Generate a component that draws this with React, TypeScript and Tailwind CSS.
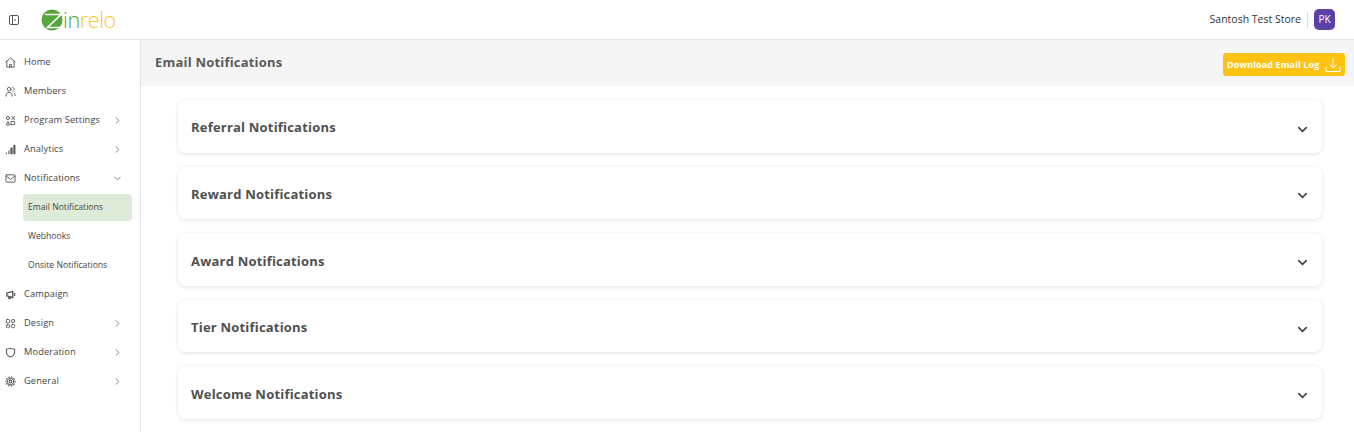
import { ChevronDown, ChevronRight } from "lucide-react";
import type { ReactNode } from "react";

const font = { fontFamily: '"Open Sans", sans-serif' };

const stroke = {
  width: 11,
  height: 11,
  viewBox: "0 0 24 24",
  fill: "none",
  stroke: "#555",
  strokeWidth: 2,
  strokeLinecap: "round" as const,
  strokeLinejoin: "round" as const,
};

const icons: Record<string, ReactNode> = {
  home: (
    <svg {...stroke}>
      <path d="M2 11 12 2l10 9" />
      <path d="M4 9v13h16V9" />
      <path d="M10 22v-6h4v6" />
    </svg>
  ),
  members: (
    <svg {...stroke}>
      <circle cx="9" cy="7" r="4" />
      <path d="M2 22c0-5 3-8 7-8s7 3 7 8" />
      <path d="M17 3c2 .5 3 2 3 4s-1 3-3 4" />
      <path d="M20 15c1.500 1 2 3 2 6" />
    </svg>
  ),
  program: (
    <svg {...stroke}>
      <circle cx="6.500" cy="6.500" r="3.500" />
      <path d="m15 3 6 7M21 3l-6 7" />
      <path d="M3 21l3.500-7 3.500 7z" />
      <rect x="14" y="14" width="7" height="7" />
    </svg>
  ),
  analytics: (
    <svg {...stroke} strokeWidth={2.4}>
      <path d="M3 21v-1" />
      <path d="M8.500 21v-6" />
      <rect x="13" y="9" width="2.500" height="12" />
      <rect x="19.500" y="3" width="2" height="18" />
    </svg>
  ),
  notifications: (
    <svg {...stroke}>
      <rect x="2" y="4" width="20" height="16" rx="2" />
      <path d="m3 7 9 7 9-7" />
    </svg>
  ),
  campaign: (
    <svg {...stroke} strokeWidth={2.8}>
      <path d="M4 9v6l13 4V5z" />
      <path d="M8 16v3a2 2 0 0 0 4 0v-2" />
      <path d="M21 10v4" />
    </svg>
  ),
  design: (
    <svg {...stroke}>
      <rect x="3" y="3" width="7" height="8" rx="2" />
      <circle cx="17.500" cy="6.500" r="3.500" />
      <rect x="3" y="15" width="7" height="6" rx="2" />
      <rect x="14" y="14" width="7" height="7" rx="2" />
    </svg>
  ),
  moderation: (
    <svg {...stroke} strokeWidth={2.2}>
      <path d="M12 22c5-2 9-5 9-11V5l-9-2-9 2v6c0 6 4 9 9 11z" />
    </svg>
  ),
  general: (
    <svg {...stroke} strokeWidth={2.2}>
      <circle cx="12" cy="12" r="3" />
      <circle cx="12" cy="12" r="7" strokeDasharray="3 2" />
      <circle cx="12" cy="12" r="10" strokeDasharray="2 4" />
    </svg>
  ),
};

type NavItem = { label: string; icon: string; arrow?: "right" | "down" };

const topNav: NavItem[] = [
  { label: "Home", icon: "home" },
  { label: "Members", icon: "members" },
  { label: "Program Settings", icon: "program", arrow: "right" },
  { label: "Analytics", icon: "analytics", arrow: "right" },
  { label: "Notifications", icon: "notifications", arrow: "down" },
];

const subNav = ["Email Notifications", "Webhooks", "Onsite Notifications"];

const bottomNav: NavItem[] = [
  { label: "Campaign", icon: "campaign" },
  { label: "Design", icon: "design", arrow: "right" },
  { label: "Moderation", icon: "moderation", arrow: "right" },
  { label: "General", icon: "general", arrow: "right" },
];

const sections = [
  "Referral Notifications",
  "Reward Notifications",
  "Award Notifications",
  "Tier Notifications",
  "Welcome Notifications",
];

function NavRow({ item }: { item: NavItem }) {
  return (
    <div className="flex h-[29px] items-center pr-[17px] pl-[5px] text-[9.3px] text-[#444]">
      <span className="flex w-[19px] shrink-0 items-center">{icons[item.icon]}</span>
      <span className="flex-1 pb-[2px] tracking-[0.1px]">{item.label}</span>
      {item.arrow === "right" && <ChevronRight size={11} color="#777" />}
      {item.arrow === "down" && <ChevronDown size={11} color="#777" />}
    </div>
  );
}

function Logo() {
  return (
    <div className="flex items-center">
      <svg width="22" height="22" viewBox="0 0 22 22">
        <circle cx="11" cy="11" r="10.500" fill="#55a73a" />
        <path d="M4 5.500h16L6.500 18.500H22" fill="none" stroke="#fff" strokeWidth="1.600" />
      </svg>
      <span className="text-[21.5px] leading-none font-light tracking-[-0.4px]">
        <span className="text-[#55a73a]">in</span>
        <span className="text-[#fdc524]">relo</span>
      </span>
    </div>
  );
}

export default function App() {
  return (
    <div className="flex h-[432px] w-[1354px] flex-col overflow-hidden bg-white" style={font}>
      <header className="flex h-[40px] shrink-0 items-center border-b border-[#e3e5ea] pr-[19px] pl-[8px]">
        <svg width="12" height="12" viewBox="0 0 12 12" fill="none" stroke="#555" strokeWidth="1">
          <rect x="1.500" y="1.500" width="9" height="9" rx="1.500" />
          <path d="M4.500 1.500v9M7.500 5 6.500 6l1 1" />
        </svg>
        <div className="ml-[21px]">
          <Logo />
        </div>
        <div className="ml-auto flex items-center">
          <span className="text-[10.5px] text-[#333]">Santosh Test Store</span>
          <span className="mx-[6px] h-[16px] w-px bg-[#ddd]" />
          <span className="flex h-[21px] w-[21px] items-center justify-center rounded-[5px] bg-[#5b40a8] text-[10px] text-white">
            PK
          </span>
        </div>
      </header>

      <div className="flex min-h-0 flex-1">
        <aside className="w-[141px] shrink-0 border-r border-[#e3e5ea] pt-[8px]">
          {topNav.map((item) => (
            <NavRow key={item.label} item={item} />
          ))}
          {subNav.map((label, i) => (
            <div key={label} className="flex h-[29px] items-center pl-[23px]">
              <span
                className={`flex h-[27px] w-[109px] items-center rounded-[4px] pl-[5px] text-[8.65px] text-[#444] ${
                  i === 0 ? "bg-[#deebd9]" : ""
                }`}
              >
                {label}
              </span>
            </div>
          ))}
          {bottomNav.map((item) => (
            <NavRow key={item.label} item={item} />
          ))}
        </aside>

        <main className="min-w-0 flex-1">
          <div className="flex h-[46px] items-center justify-between bg-[#f5f5f5] pr-[9px] pl-[14px]">
            <h1 className="text-[13px] font-bold tracking-[0.2px] text-[#5a5a5a]">Email Notifications</h1>
            <button className="mt-[3px] flex h-[23px] w-[122px] items-center justify-between rounded-[3px] bg-[#fec312] pr-[4px] pl-[4px] text-[9px] font-bold tracking-[0.1px] text-white">
              Download Email Log
              <svg width="16" height="16" viewBox="0 0 16 16" fill="none" stroke="#fff" strokeWidth="1">
                <path d="M1 10v4.500h14V10M8 1.500v9M4.500 7.500 8 11l3.500-3.500" />
              </svg>
            </button>
          </div>

          <div className="flex flex-col gap-[14px] pt-[14px] pr-[32px] pl-[37px]">
            {sections.map((title) => (
              <div
                key={title}
                className="flex h-[52.6px] items-center justify-between rounded-[8px] bg-white pr-[12px] pl-[13px] shadow-[0_1px_4px_rgba(0,0,0,0.12)]"
              >
                <span className="pt-[3.8px] text-[13px] font-bold tracking-[0.2px] text-[#505050]">{title}</span>
                <ChevronDown size={15} color="#444" strokeWidth={2.6} className="mt-[6px]" />
              </div>
            ))}
          </div>
        </main>
      </div>
    </div>
  );
}
